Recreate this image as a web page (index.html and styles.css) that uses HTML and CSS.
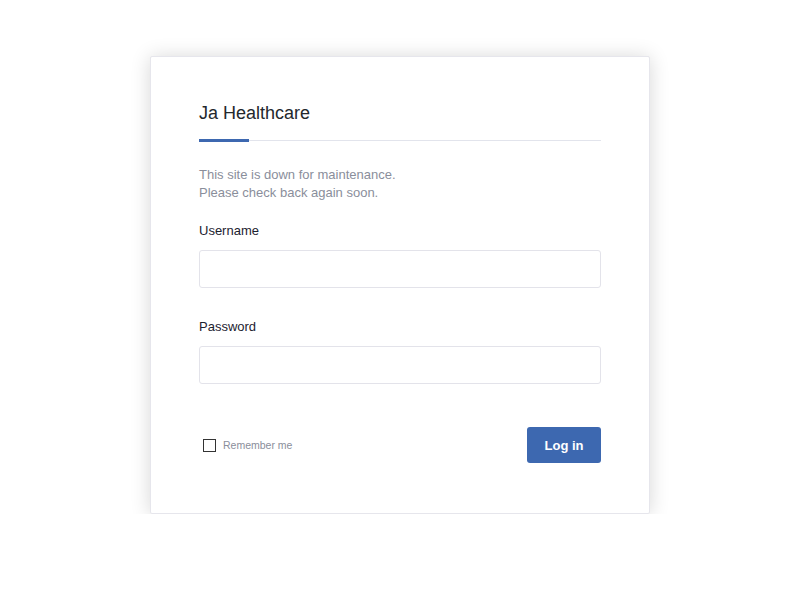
FILE: index.html
```html
<!DOCTYPE html>
<html>
<head>
<meta charset="utf-8">
<link rel="stylesheet" href="styles.css">
</head>
<body>
<div class="card">
  <div class="title">Ja Healthcare</div>
  <p class="notice">This site is down for maintenance.<br>Please check back again soon.</p>
  <label class="label">Username</label>
  <div class="input"></div>
  <label class="label">Password</label>
  <div class="input"></div>
  <div class="actions">
    <label class="remember"><span class="box"></span>Remember me</label>
    <button class="btn">Log in</button>
  </div>
</div>
</body>
</html>
```

FILE: styles.css
```css
html, body { margin: 0; padding: 0; background: #fff; }
body { font-family: "Liberation Sans", Arial, sans-serif; }
.card {
  box-sizing: border-box;
  width: 500px;
  margin: 56px auto 0;
  padding: 46px 48px 50px;
  background: #fff;
  border: 1px solid #e6e6ec;
  border-radius: 2px;
  box-shadow: 0 1px 20px rgba(0,0,0,0.16);
}
.title {
  position: relative;
  font-size: 18px;
  line-height: 21px;
  color: #23282d;
  padding-bottom: 16px;
  border-bottom: 1px solid #e2e4ec;
}
.title::after {
  content: "";
  position: absolute;
  left: 0;
  bottom: -2px;
  width: 50px;
  height: 3px;
  background: #3d68b0;
}
.notice {
  margin: 25px 0 0;
  font-size: 13px;
  line-height: 18px;
  color: #8a8e9b;
}
.label {
  display: block;
  margin-top: 20px;
  font-size: 13px;
  line-height: 18px;
  color: #1c2230;
}
.input {
  box-sizing: border-box;
  height: 38px;
  margin-top: 10px;
  border: 1px solid #e3e3ea;
  border-radius: 3px;
}
.input + .label { margin-top: 30px; }
.actions {
  display: flex;
  justify-content: space-between;
  align-items: center;
  margin-top: 43px;
}
.remember {
  display: flex;
  align-items: center;
  font-size: 10.5px;
  color: #8a8e9b;
  padding-left: 4px;
}
.box {
  box-sizing: border-box;
  width: 13px;
  height: 13px;
  border: 1px solid #333;
  margin-right: 7px;
}
.btn {
  width: 74px;
  height: 36px;
  border: none;
  border-radius: 3px;
  background: #3d68b0;
  color: #fff;
  font-family: "Liberation Sans", Arial, sans-serif;
  font-weight: bold;
  font-size: 13px;
}
```
